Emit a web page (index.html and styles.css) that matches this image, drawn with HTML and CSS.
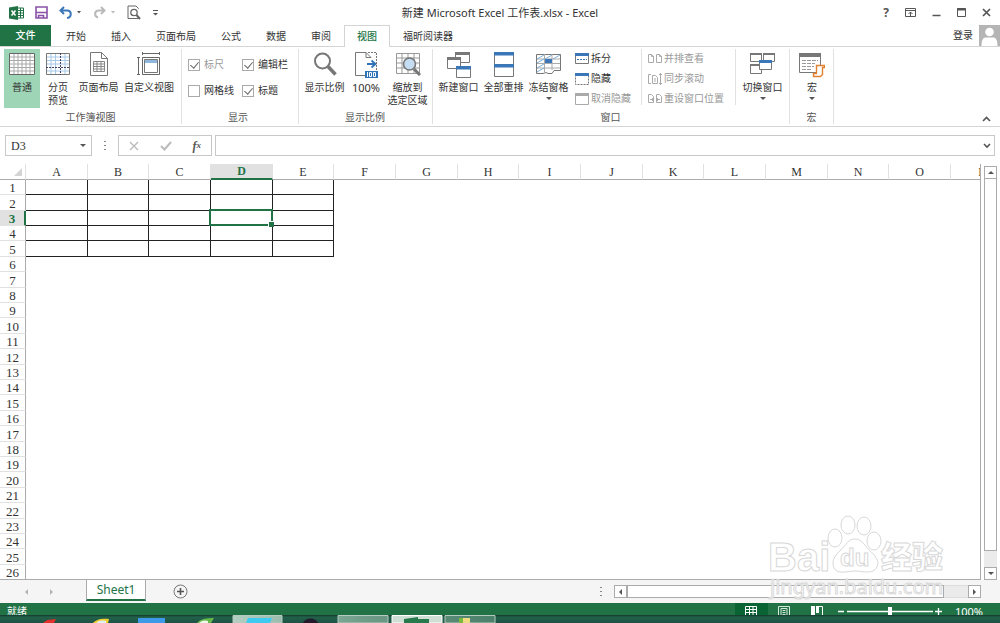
FILE: index.html
```html
<!DOCTYPE html>
<html lang="zh-CN">
<head>
<meta charset="utf-8">
<title>新建 Microsoft Excel 工作表.xlsx - Excel</title>
<link rel="stylesheet" href="styles.css">
</head>
<body>
<div class="app">
  <header class="titlebar">
    <div class="quick">
      <svg class="logo" width="15" height="14" viewBox="0 0 15 14"><path d="M8 2h6.500v10H8z" fill="#fff" stroke="#217346"/><path d="M9 4.500h5M9 7h5M9 9.500h5M11.500 2v10" stroke="#217346"/><path d="M0 1.500 9 0v14L0 12.500z" fill="#217346"/><path d="M2.500 4.500l4 5M6.500 4.500l-4 5" stroke="#fff" stroke-width="1.500"/></svg>
      <button class="tool save" aria-label="保存"><svg width="13" height="13" viewBox="0 0 13 13"><path d="M1 1h11v11H1z" fill="#fff" stroke="#8a52a8" stroke-width="1.600"/><path d="M1 6.500h11M3.500 12V9.500h5V12" fill="none" stroke="#8a52a8" stroke-width="1.600"/></svg></button>
      <button class="tool" aria-label="撤消"><svg width="23" height="14" viewBox="0 0 23 14"><path d="M5 1 1.500 4.500 5 8M2 4.500h6c5 0 5 7 0 7.500" fill="none" stroke="#3a76b8" stroke-width="2"/><path d="M18 5h4l-2 2.500z" fill="#555"/></svg></button>
      <button class="tool" aria-label="恢复"><svg width="23" height="14" viewBox="0 0 23 14"><path d="M8 1l3.500 3.500L8 8M11 4.500H6c-5 0-5 6-1 7" fill="none" stroke="#b9b9b9" stroke-width="2"/><path d="M18 5h4l-2 2.500z" fill="#b9b9b9"/></svg></button>
      <button class="tool preview" aria-label="打印预览"><svg width="14" height="15" viewBox="0 0 14 15"><path d="M11.500 4V3.500L9 1H1v12.500h11" fill="none" stroke="#666"/><circle cx="7" cy="7.500" r="3.200" fill="#fff" stroke="#666" stroke-width="1.300"/><path d="M9.500 10l3.500 4" stroke="#666" stroke-width="2"/></svg></button>
      <button class="tool" aria-label="自定义快速访问工具栏"><svg width="7" height="8" viewBox="0 0 7 8"><path d="M1 1.500h5" stroke="#555"/><path d="M1 4h5L3.500 6.500z" fill="#555"/></svg></button>
    </div>
    <h1 class="title">新建 Microsoft Excel 工作表.xlsx - Excel</h1>
    <div class="controls">
      <button class="tool help" aria-label="帮助">?</button>
      <button class="tool" aria-label="功能区显示选项"><svg width="11" height="9" viewBox="0 0 11 9"><path d="M.5.5h10v8H.5zM.5 2.500h10M5.500 8V4M3.500 6l2-2 2 2" fill="none" stroke="#555"/></svg></button>
      <button class="tool" aria-label="最小化"><svg width="9" height="9" viewBox="0 0 9 9"><path d="M.5 7.500h8" stroke="#555" stroke-width="1.500"/></svg></button>
      <button class="tool" aria-label="最大化"><svg width="9" height="9" viewBox="0 0 9 9"><path d="M.5.5h8v8h-8z" fill="none" stroke="#555"/><path d="M0 1.500h9" stroke="#555" stroke-width="2"/></svg></button>
      <button class="tool" aria-label="关闭"><svg width="9" height="9" viewBox="0 0 9 9"><path d="M1 1l7 7M8 1 1 8" stroke="#555" stroke-width="1.700"/></svg></button>
    </div>
  </header>

  <nav class="tabs">
    <button class="file">文件</button>
    <div class="tablist">
      <button class="tab">开始</button>
      <button class="tab">插入</button>
      <button class="tab">页面布局</button>
      <button class="tab">公式</button>
      <button class="tab">数据</button>
      <button class="tab">审阅</button>
      <button class="tab active">视图</button>
      <button class="tab">福昕阅读器</button>
    </div>
    <button class="login">登录</button>
    <svg class="avatar" width="21" height="21" viewBox="0 0 21 21"><path d="M0 0h21v21H0z" fill="#b5b5b5"/><circle cx="10.500" cy="7" r="4.300" fill="#fff"/><path d="M2.500 21c0-7 2-8.500 5-8.500h6c3 0 5 1.500 5 8.500z" fill="#fff"/></svg>
  </nav>

  <section class="ribbon">
    <div class="group views">
      <div class="items">
        <button class="big pressed"><svg width="26" height="24" viewBox="0 0 26 24"><path d="M.5 1.500h25v21H.5z" fill="#fff" stroke="#666"/><path d="M1 5h24M1 8.500h24M1 12h24M1 15.500h24M1 19h24M5 2v20M9 2v20M13 2v20M17 2v20M21 2v20" stroke="#aaa"/></svg><span>普通</span></button>
        <button class="big"><svg width="24" height="24" viewBox="0 0 24 24"><path d="M.5 1.500h23v21H.5z" fill="#fff" stroke="#777"/><path d="M1 5h22M1 8.500h22M1 12h22M1 19h22M5 2v20M9.500 2v20M19 2v20" stroke="#a6c9e8"/><path d="M14.500 1v22M0 15.500h24" stroke="#446" stroke-dasharray="2 1"/></svg><span>分页<br>预览</span></button>
        <button class="big wide"><svg width="20" height="24" viewBox="0 0 20 24"><path d="M1.500.5h11l6 6v17h-17zM12.500.5v6h6" fill="#fff" stroke="#777"/><path d="M4.500 9.500h11v10h-11zM4.500 12h11M4.500 14.500h11M4.500 17h11M8 9.500v10M12 9.500v10" fill="none" stroke="#888"/></svg><span>页面布局</span></button>
        <button class="big widest"><svg width="24" height="24" viewBox="0 0 24 24"><path d="M5.500 5.500h17v17h-17z" fill="#fff" stroke="#666"/><path d="M7.500 7.500h13v13h-13z" fill="none" stroke="#777"/><path d="M8 8h12v3H8z" fill="#8db7dd"/><path d="M5 1.500h18M5.500 0v3M22.500 0v3M1.500 5v18M0 5.500h3M0 22.500h3" fill="none" stroke="#666"/></svg><span>自定义视图</span></button>
      </div>
      <h2 class="caption">工作簿视图</h2>
    </div>
    <div class="group show">
      <div class="checks">
        <label class="check off"><input type="checkbox" checked disabled>标尺</label>
        <label class="check"><input type="checkbox" checked>编辑栏</label>
        <label class="check"><input type="checkbox">网格线</label>
        <label class="check"><input type="checkbox" checked>标题</label>
      </div>
      <h2 class="caption">显示</h2>
    </div>
    <div class="group zoom">
      <div class="items">
        <button class="big wide"><svg width="24" height="24" viewBox="0 0 24 24"><circle cx="9.500" cy="9" r="7.500" fill="#fff" stroke="#777" stroke-width="2"/><path d="M15 14.500l7.500 8" stroke="#777" stroke-width="3.500"/></svg><span>显示比例</span></button>
        <button class="big mid"><svg width="24" height="26" viewBox="0 0 24 26"><path d="M12 .5H1.500v23H11M12 .5l5 5h-5z" fill="#fff" stroke="#777"/><path d="M14 .5h8.500V18" fill="none" stroke="#777" stroke-dasharray="2 1"/><path d="M13 12h8M17.500 8.500l4 3.500-4 3.500" fill="none" stroke="#2f74b8" stroke-width="1.800"/><path d="M11 19h13v7H11z" fill="#2f74b8"/><path d="M13.500 20v5M15.500 20.500h2v4h-2zM19.500 20.500h2v4h-2z" fill="none" stroke="#fff"/></svg><span class="latin">100%</span></button>
        <button class="big wide"><svg width="26" height="24" viewBox="0 0 26 24"><path d="M1.500 1.500h23v20h-23zM1.500 6h23M1.500 11h23M1.500 16h23M7 1.500v20M13 1.500v20M19 1.500v20" fill="#fff" stroke="#999"/><circle cx="14.500" cy="12" r="6" fill="#c5ddf2" stroke="#777" stroke-width="1.600"/><path d="M19 17l6 6" stroke="#777" stroke-width="3"/></svg><span>缩放到<br>选定区域</span></button>
      </div>
      <h2 class="caption">显示比例</h2>
    </div>
    <div class="group window">
      <div class="items">
        <button class="big wide"><svg width="24" height="26" viewBox="0 0 24 26"><path d="M8.500.5h14v10h-14z" fill="#fff" stroke="#777"/><path d="M8 0h15v3H8z" fill="#777"/><path d="M.5 5.500h13v11H.5z" fill="#fff" stroke="#777"/><path d="M0 5h14v3H0z" fill="#777"/><path d="M9.500 14.500h14v11h-14z" fill="#fff" stroke="#777"/><path d="M9 14h15v3.500H9z" fill="#3a76b8"/></svg><span>新建窗口</span></button>
        <button class="big wide"><svg width="22" height="26" viewBox="0 0 22 26"><path d="M1.500.5h19v24h-19zM1.500 12.500h19" fill="#fff" stroke="#777"/><path d="M1 0h20v3.500H1zM1 12h20v3.500H1z" fill="#3a76b8"/></svg><span>全部重排</span></button>
        <button class="big wide"><svg width="25" height="24" viewBox="0 0 25 24"><path d="M.5 2.500h24v16H18l-2 3h-4l-2-1-3 1H.5z" fill="#fff" stroke="#777"/><path d="M1 7h23M1 11.500h23M1 16h23M8.500 2v18M16 2v16" stroke="#aaa"/><path d="M9 7h7v4H9z" fill="#3a76b8"/><path d="M1 7l7-4M9 7l7-4M17 7l7-4M1 11l7-4M1 16l7-4M1 20l7-4" stroke="#7fb0dc"/></svg><span>冻结窗格</span><i class="arrow"></i></button>
        <div class="list first">
          <button class="small"><svg width="14" height="12" viewBox="0 0 14 12"><path d="M.5.5h13v10H.5z" fill="#fff" stroke="#777"/><path d="M0 0h14v3H0z" fill="#3a76b8"/><path d="M2 6.500h10" stroke="#3a76b8" stroke-dasharray="2 1"/></svg>拆分</button>
          <button class="small"><svg width="14" height="12" viewBox="0 0 14 12"><path d="M.5.5h13v11H.5z" fill="#fff" stroke="#777" stroke-dasharray="2 1"/><path d="M0 0h14v3H0z" fill="#3a76b8"/></svg>隐藏</button>
          <button class="small" disabled><svg width="14" height="12" viewBox="0 0 14 12"><path d="M.5.5h13v11H.5z" fill="#fff" stroke="#aaa"/><path d="M0 0h14v3H0z" fill="#aaa"/></svg>取消隐藏</button>
        </div>
        <div class="list second">
          <button class="small" disabled><svg width="14" height="12" viewBox="0 0 14 12"><path d="M.5 1.500h3l2 2v6h-5zM8.500 1.500h3l2 2v6h-5zM3.500 1.500v2h2M11.500 1.500v2h2" fill="none" stroke="#aaa"/></svg>并排查看</button>
          <button class="small" disabled><svg width="14" height="12" viewBox="0 0 14 12"><path d="M3 1.500H.5v9H3M4.500 2.500h3l2 2v6h-5zM6 6h2M6 8h2M12.500 0v12M11 2l1.500-1.500L14 2M11 10l1.500 1.500L14 10" fill="none" stroke="#aaa"/></svg>同步滚动</button>
          <button class="small" disabled><svg width="14" height="12" viewBox="0 0 14 12"><path d="M.5 1.500h3l2 2v6h-5zM8.500 1.500h3l2 2v6h-5zM2 6.500h4M4.500 5v3M8 6.500h4M9.500 5v3" fill="none" stroke="#aaa"/></svg>重设窗口位置</button>
        </div>
        <button class="big wide switch"><svg width="26" height="24" viewBox="0 0 26 24"><path d="M.5 1.500h11v8H.5zM13.500 1.500h11v8h-11zM.5 12.500h11v9H.5z" fill="#fff" stroke="#777"/><path d="M0 1h12v2H0zM13 1h12v2H13zM0 12h12v2H0z" fill="#777"/><path d="M9.500 8.500h12v9h-12z" fill="#fff" stroke="#777"/><path d="M9 8h13v3H9z" fill="#3a76b8"/></svg><span>切换窗口</span><i class="arrow"></i></button>
      </div>
      <h2 class="caption">窗口</h2>
    </div>
    <div class="group macro">
      <div class="items">
        <button class="big"><svg width="26" height="26" viewBox="0 0 26 26"><path d="M.5 1.500h21v19H.5z" fill="#fff" stroke="#777"/><path d="M0 1h22v4H0z" fill="#777"/><path d="M3 8.500h16M3 11.500h13M3 14.500h12M3 17.500h10" stroke="#999" stroke-dasharray="4 1"/><path d="M17.500 13.500h8v2h-2v7l-2 2h-7v-3h3z" fill="#fff" stroke="#e08030" stroke-width="1.400"/></svg><span>宏</span><i class="arrow"></i></button>
      </div>
      <h2 class="caption">宏</h2>
    </div>
    <button class="tool collapse" aria-label="折叠功能区"><svg width="9" height="6" viewBox="0 0 9 6"><path d="M1 5l3.500-3.500L8 5" fill="none" stroke="#555" stroke-width="1.600"/></svg></button>
  </section>

  <section class="formula">
    <div class="namebox"><input class="name" aria-label="名称框" value="D3"><i class="arrow"></i></div>
    <i class="dots"></i>
    <div class="fx">
      <button class="tool" aria-label="取消"><svg width="10" height="10" viewBox="0 0 10 10"><path d="M1 1l8 8M9 1 1 9" stroke="#bbb" stroke-width="1.400"/></svg></button>
      <button class="tool" aria-label="输入"><svg width="12" height="10" viewBox="0 0 12 10"><path d="M1 5l3.500 3.500L11 1" fill="none" stroke="#bbb" stroke-width="2"/></svg></button>
      <button class="tool fxbtn" aria-label="插入函数">f<sub>x</sub></button>
    </div>
    <div class="entry"><input class="value" aria-label="编辑栏"><svg width="8" height="6" viewBox="0 0 8 6"><path d="M1 1l3 3 3-3" fill="none" stroke="#555" stroke-width="1.600"/></svg></div>
  </section>

  <main class="sheet">
    <div class="cells">
      <table class="grid">
        <thead><tr><th class="corner"><i></i></th><th>A</th><th>B</th><th>C</th><th class="current">D</th><th>E</th><th>F</th><th>G</th><th>H</th><th>I</th><th>J</th><th>K</th><th>L</th><th>M</th><th>N</th><th>O</th><th>P</th></tr></thead>
        <tbody>
          <tr class="ruled"><th>1</th><td></td><td></td><td></td><td></td><td></td></tr>
          <tr class="ruled"><th>2</th><td></td><td></td><td></td><td></td><td></td></tr>
          <tr class="ruled"><th class="current">3</th><td></td><td></td><td></td><td class="selected"></td><td></td></tr>
          <tr class="ruled"><th>4</th><td></td><td></td><td></td><td></td><td></td></tr>
          <tr class="ruled"><th>5</th><td></td><td></td><td></td><td></td><td></td></tr>
          <tr><th>6</th></tr><tr><th>7</th></tr><tr><th>8</th></tr><tr><th>9</th></tr><tr><th>10</th></tr>
          <tr><th>11</th></tr><tr><th>12</th></tr><tr><th>13</th></tr><tr><th>14</th></tr><tr><th>15</th></tr>
          <tr><th>16</th></tr><tr><th>17</th></tr><tr><th>18</th></tr><tr><th>19</th></tr><tr><th>20</th></tr>
          <tr><th>21</th></tr><tr><th>22</th></tr><tr><th>23</th></tr><tr><th>24</th></tr><tr><th>25</th></tr>
          <tr><th>26</th></tr>
        </tbody>
      </table>
    </div>
    <div class="vscroll">
      <button class="step" aria-label="向上滚动"><i class="up"></i></button>
      <div class="track"><div class="thumb"></div></div>
      <button class="step" aria-label="向下滚动"><i class="down"></i></button>
    </div>
  </main>

  <footer class="sheetbar">
    <div class="moves"><i class="left"></i><i class="right"></i></div>
    <button class="sheettab">Sheet1</button>
    <button class="tool add" aria-label="新工作表"><svg width="15" height="15" viewBox="0 0 15 15"><circle cx="7.500" cy="7.500" r="6.500" fill="none" stroke="#777"/><path d="M7.500 4v7M4 7.500h7" stroke="#555" stroke-width="1.600"/></svg></button>
    <i class="dots"></i>
    <div class="hscroll">
      <button class="step" aria-label="向左滚动"><i class="left"></i></button>
      <div class="track"><div class="thumb"></div></div>
      <button class="step" aria-label="向右滚动"><i class="right"></i></button>
    </div>
  </footer>

  <div class="status">
    <span class="ready">就绪</span>
    <button class="mode on" aria-label="普通"><svg width="12" height="10" viewBox="0 0 12 10"><path d="M.5.5h11v9H.5zM4.500 0v10M8 0v10M0 3.500h12M0 6.500h12" fill="none" stroke="#fff"/></svg></button>
    <button class="mode" aria-label="页面布局"><svg width="12" height="10" viewBox="0 0 12 10"><path d="M.5.500h11v9H.5zM3 2.500h6V10M3 2.500V10M4.500 4.500h3M4.500 6.500h3M4.500 8.500h3" fill="none" stroke="#d5e6dc"/></svg></button>
    <button class="mode" aria-label="分页预览"><svg width="12" height="10" viewBox="0 0 12 10"><path d="M0 0h4v10H0zM5 0h3v7H5z" fill="#fff"/><path d="M8 .5h3.500V10" fill="none" stroke="#fff"/></svg></button>
    <svg class="slider" width="104" height="10" viewBox="0 0 104 10"><path d="M0 5.500h6M9 5.500h86M97 5.500h7M100.500 2v7" stroke="#fff" stroke-width="1.300"/><path d="M50 1h4v8h-4z" fill="#fff"/></svg>
    <span class="percent">100%</span>
  </div>

  <div class="taskbar">
    <svg class="apps" width="496" height="8" viewBox="0 0 496 8">
      <defs><linearGradient id="glass"><stop offset="0" stop-color="#b4cfc3"/><stop offset=".5" stop-color="#6f9c89"/><stop offset="1" stop-color="#4b806a"/></linearGradient></defs>
      <path d="M43 8l4-3 9-1-2 4z" fill="#e0312b"/>
      <path d="M93 8c3-4 10-5 16-4l-1 4z" fill="#f0cf35"/><path d="M96 8c3-3 7-3 10-2v2z" fill="#dff1f5"/>
      <path d="M138 3h27v5h-27z" fill="#3d9ae8"/>
      <path d="M197 8c3-4 9-5 17-5l-3 5z" fill="#65b84a"/><path d="M199 8c3-3 6-3 9-2v2z" fill="#eef8e8"/>
      <path d="M233 .5h49V8h-49zM338 .5h50V8h-50zM445 .5h50V8h-50z" fill="url(#glass)" stroke="#b5cbbf"/>
      <path d="M392 .5h50V8h-50z" fill="#cfdfd6" stroke="#fff"/>
      <path d="M246 8l2-5h24l-2 5z" fill="#3fcaf2"/>
      <path d="M303 8c2-6 13-6 15 0z" fill="#241a2c"/>
      <path d="M404 4l14-2v2h11v4h-25z" fill="#267a4c"/>
      <path d="M459 3h11v5h-11z" fill="#efdb83"/><path d="M459 3h4v5h-4z" fill="#7bb93c"/>
    </svg>
  </div>

  <svg class="watermark" width="180" height="86" viewBox="0 0 180 86" aria-hidden="true">
    <g fill="#fff" fill-opacity=".8" stroke="#d8d8d8">
      <text class="brand" x="1" y="56">Bai</text>
      <ellipse cx="68" cy="23" rx="7" ry="9"/><ellipse cx="81" cy="10" rx="7" ry="9"/><ellipse cx="97" cy="11" rx="7" ry="9"/><ellipse cx="107" cy="26" rx="7" ry="9"/>
      <path d="M88 24c7 0 9 6 14 11 6 5 11 11 8 17-4 8-14 4-22 4s-17 4-21-3c-3-7 1-13 7-18 5-5 7-11 14-11z"/>
      <text class="du" x="73" y="51">du</text>
      <text class="brandcn" x="114" y="53">经验</text>
      <text class="url" x="3" y="79">jingyan.baidu.com</text>
    </g>
  </svg>
</div>
</body>
</html>
```

FILE: styles.css
```css
* { box-sizing: border-box; }

body {
  margin: 0;
  font: 10px/13px "Noto Sans", "Noto Sans CJK SC", sans-serif;
  color: #333;
  background: #fff;
}

button, input {
  font: inherit;
  color: inherit;
  margin: 0;
  padding: 0;
  border: 0;
  background: none;
  border-radius: 0;
}

button { white-space: nowrap; }
svg { display: block; flex: none; }
h1, h2 { margin: 0; font-weight: normal; }

.app {
  position: relative;
  display: flex;
  flex-direction: column;
  height: 100vh;
  overflow: hidden;
}

.tool { display: flex; align-items: center; justify-content: center; }

/* Title bar */
.titlebar {
  flex: none;
  display: grid;
  grid-template-columns: 1fr auto 1fr;
  align-items: center;
  height: 25px;
}
.quick { display: flex; align-items: center; gap: 11px; padding-left: 9px; }
.title { font-size: 11px; line-height: 16px; }
.controls { display: flex; align-items: center; justify-content: flex-end; gap: 16px; padding-right: 9px; }
.help { font-size: 12px; font-weight: bold; color: #555; }

/* Tabs */
.tabs { flex: none; display: flex; height: 22px; border-bottom: 1px solid #d4d4d4; }
.file { width: 51px; color: #fff; background: #217346; }
.tablist { flex: 1; display: flex; gap: 1px; padding-left: 3px; }
.tab { padding: 0 12px; height: 22px; }
.tab.active { color: #217346; background: #fff; border: 1px solid #d4d4d4; border-bottom: 0; }
.file, .tab.active { font-weight: 500; }
.login { padding-right: 6px; }

/* Ribbon */
.ribbon { flex: none; display: flex; height: 80px; padding-top: 2px; border-bottom: 1px solid #d4d4d4; }
.group {
  display: flex;
  flex-direction: column;
  justify-content: space-between;
  height: 75px;
  border-right: 1px solid #e1e1e1;
}
.items { display: flex; align-items: flex-start; }
.caption { padding-right: 4px; font-size: 10px; line-height: 13px; text-align: center; color: #555; }
.big {
  display: flex;
  flex-direction: column;
  align-items: center;
  width: 36px;
  height: 59px;
  padding-top: 3px;
}
.big svg { margin-bottom: auto; }
.big span { height: 27px; }
.big .arrow { margin-top: -11px; margin-bottom: 8px; }
.wide { width: 45px; }
.mid { width: 38px; }
.widest { width: 56px; }
.latin { font-size: 11px; }
.pressed { background: #9fd5b7; }
.arrow { border: 3px solid transparent; border-top-color: #555; border-bottom: 0; }
.views { width: 182px; padding-left: 4px; }
.show { width: 117px; }
.zoom { width: 134px; padding-left: 3px; }
.window { width: 357px; padding-left: 3px; }
.macro { width: 44px; padding-left: 4px; }
.collapse { align-self: flex-end; margin: 0 9px 4px auto; }

.checks { display: grid; grid-template-columns: 54px 1fr; row-gap: 13px; padding: 9px 0 0 6px; }
.check { display: flex; align-items: center; gap: 4px; white-space: nowrap; }
.check input { appearance: none; flex: none; width: 12px; height: 12px; border: 1px solid #aaa; background: #fff; }
.check input:checked::after {
  content: "";
  display: block;
  width: 4px;
  height: 7px;
  margin: 0 0 0 3px;
  border: solid #666;
  border-width: 0 1px 1px 0;
  transform: rotate(40deg);
}
.off { color: #999; }

.list { display: flex; flex-direction: column; gap: 7px; padding-top: 3px; height: 56px; }
.small { display: flex; align-items: center; gap: 2px; }
.small:disabled { color: #999; }
.first { width: 71px; padding-left: 4px; border-right: 1px solid #e1e1e1; }
.second { width: 94px; padding-left: 6px; border-right: 1px solid #e1e1e1; }
.switch { margin-left: 4px; }

/* Formula bar */
.formula { flex: none; display: flex; align-items: center; height: 37px; padding: 0 5px; }
.namebox, .fx, .entry { display: flex; align-items: center; height: 21px; border: 1px solid #c8c8c8; }
.namebox { width: 87px; padding: 0 5px; }
.name { flex: 1; min-width: 0; font: 12px/16px "Liberation Serif", serif; }
.dots { width: 2px; height: 9px; margin: 0 12px; background: repeating-linear-gradient(#888 0 1px, transparent 1px 4px); }
.fx { width: 94px; justify-content: space-between; padding: 0 10px; }
.fxbtn { font: italic bold 12px/14px "Liberation Serif", serif; color: #555; }
.fxbtn sub { font-size: 9px; line-height: 9px; }
.entry { flex: 1; margin-left: 3px; padding-right: 3px; }
.value { flex: 1; }

/* Worksheet */
.sheet { flex: 1; min-height: 0; display: flex; }
.cells { flex: 1; min-width: 0; overflow: hidden; border-right: 1px solid #ababab; border-bottom: 1px solid #ababab; }
.grid { table-layout: fixed; width: 1013px; border-spacing: 0; font: 12px/14px "Liberation Serif", serif; }
.grid th, .grid td { padding: 0; }
.grid th { font-weight: normal; }
.grid thead th { width: 62px; height: 16px; padding-top: 1px; border-right: 1px solid #e1e1e1; border-bottom: 1px solid #ababab; }
.grid thead th:nth-child(3n) { width: 61px; }
.grid thead .corner { width: 26px; }
.corner i { display: block; width: 0; margin-left: 14px; border-left: 8px solid transparent; border-bottom: 8px solid #d4d4d4; }
.grid tbody th { height: 15px; padding-top: 1px; font-size: 13px; line-height: 13px; border-right: 1px solid #ababab; border-bottom: 1px solid #e1e1e1; }
.grid tbody tr:nth-child(5n+2) th, .grid tbody tr:nth-child(5n) th { height: 16px; }
.ruled td { border-right: 1px solid #222; border-bottom: 1px solid #222; }
.grid .current { color: #217346; font-weight: bold; background: #e1e1e1; }
.grid thead .current { line-height: 13px; border-bottom: 2px solid #217346; }
.grid tbody .current { border-right: 2px solid #217346; }
.selected { position: relative; }
.selected::before { content: ""; position: absolute; inset: -2px -1px -1px -2px; border: 2px solid #217346; }
.selected::after { content: ""; position: absolute; right: -2px; bottom: -2px; width: 5px; height: 5px; background: #217346; border: solid #fff; border-width: 1px 0 0 1px; }

/* Scroll bars */
.vscroll { display: flex; flex-direction: column; width: 13px; margin: 2px 3px 0; }
.step { display: flex; flex: none; align-items: center; justify-content: center; width: 13px; height: 13px; border: 1px solid #ababab; background: #fff; }
.track { flex: 1; background: #ebebeb; }
.vscroll .thumb { height: 96%; border: 1px solid #ababab; border-top: 0; background: #fff; }
.up, .down { border: 3px solid transparent; }
.up { border-bottom-color: #555; border-top: 0; }
.down { border-top-color: #555; border-bottom: 0; }
.left, .right { border: 3px solid transparent; }
.left { border-right-color: #555; border-left: 0; }
.right { border-left-color: #555; border-right: 0; }

/* Sheet tabs */
.sheetbar { flex: none; display: flex; align-items: center; height: 23px; padding-right: 19px; background: #f5f5f5; }
.moves { display: flex; justify-content: center; gap: 22px; width: 86px; padding-right: 9px; opacity: .4; }
.sheettab { align-self: flex-start; width: 60px; height: 21px; font-size: 12px; color: #217346; background: #fff; border: solid #ababab; border-width: 0 1px 2px; border-bottom-color: #217346; }
.add { margin-left: 27px; }
.sheetbar .dots { margin-left: auto; }
.hscroll { display: flex; flex: 0 1 367px; }
.hscroll .track { border: solid #ddd; border-width: 1px 0; }
.hscroll .thumb { width: 93%; height: 13px; margin: -1px 0; border: 1px solid #ababab; background: #fff; }

/* Status bar */
.status { flex: none; display: flex; height: 12px; overflow: hidden; padding: 0 17px 0 7px; color: #fff; background: #217346; }
.ready { flex: 1; padding-top: 2px; }
.mode { display: flex; justify-content: center; width: 33px; padding-top: 3px; }
.mode.on { background: #0a6332; }
.slider { margin: 3px 13px 0 4px; }
.percent { font-size: 11px; padding-top: 2px; }

/* Desktop task bar */
.taskbar { flex: none; height: 8px; background: linear-gradient(#10362a, #23604a 2px, #1d5245); }

.watermark { position: absolute; right: 53px; bottom: 22px; }
.brand { font: bold 40px "Liberation Sans", sans-serif; }
.du { font: bold 24px "Liberation Sans", sans-serif; }
.brandcn { font: 900 31px "Noto Sans CJK SC", sans-serif; }
.url { font: 20px "Noto Sans", sans-serif; }
```
